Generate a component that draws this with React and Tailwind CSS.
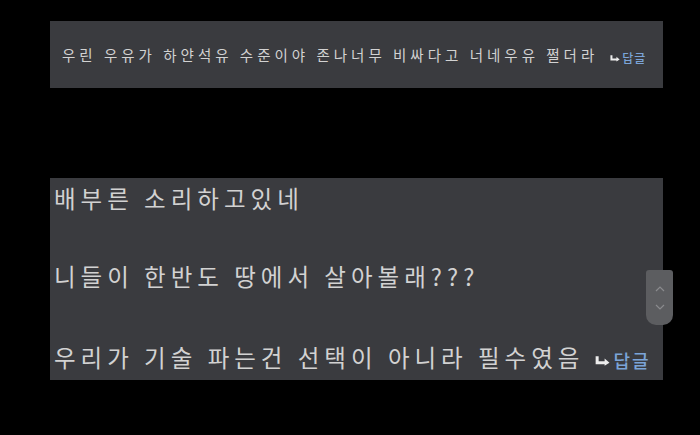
const font = { fontFamily: '"Noto Sans CJK KR", "Noto Sans", sans-serif' }

function ReplyTag({ size = 'sm' }) {
  const big = size === 'lg'
  return (
    <span className={`inline-flex items-center ${big ? 'gap-[3px]' : 'gap-[2px]'}`}>
      <svg width={big ? 15 : 10} height={big ? 11 : 8} viewBox="0 0 14 10" className="shrink-0">
        <path d="M2 1 V7 H10" fill="none" stroke="#ececec" strokeWidth="2.8" />
        <path d="M9 3.2 L13.5 7 L9 10 Z" fill="#ececec" />
      </svg>
      <span
        className={
          big
            ? 'text-[18px] tracking-[2px] font-medium text-[#7ba4d8]'
            : 'text-[12px] tracking-[1px] font-medium text-[#7ba4d8]'
        }
      >
        답글
      </span>
    </span>
  )
}

export default function App() {
  return (
    <div className="w-[700px] h-[435px] bg-black overflow-hidden pt-[21px]" style={font}>
      {/* first comment */}
      <div className="ml-[50px] w-[613px] h-[67px] bg-[#3a3b3f] flex items-center pl-[12px] pt-[1px]">
        <span className="text-[14.5px] text-[#d2d2d2] tracking-[4px] whitespace-nowrap">
          우린 우유가 하얀석유 수준이야 존나너무 비싸다고 너네우유 쩔더라
        </span>
        <span className="ml-[12px]">
          <ReplyTag />
        </span>
      </div>

      {/* second comment */}
      <div className="relative ml-[50px] mt-[90px] w-[613px] h-[202px] bg-[#3a3b3f] pl-[4px] pt-[1px]">
        <div className="text-[23.5px] leading-[39px] text-[#d2d2d2] tracking-[5px] whitespace-nowrap">
          <p>배부른 소리하고있네</p>
          <p>&nbsp;</p>
          <p>니들이 한반도 땅에서 살아볼래???</p>
          <p>&nbsp;</p>
          <p className="flex items-center">
            <span>우리가 기술 파는건 선택이 아니라 필수였음</span>
            <span className="ml-[11px] mt-[2px]">
              <ReplyTag size="lg" />
            </span>
          </p>
        </div>

        {/* scrollbar thumb */}
        <div className="absolute left-[596px] top-[92px] w-[27px] h-[55px] bg-[#5c5d60] rounded-b-[10px] rounded-t-[3px] flex flex-col items-center justify-center gap-[12px]">
          <svg width="10" height="6" viewBox="0 0 10 6">
            <path d="M1 5 L5 1 L9 5" fill="none" stroke="#8a8b8e" strokeWidth="1.2" />
          </svg>
          <svg width="10" height="6" viewBox="0 0 10 6">
            <path d="M1 1 L5 5 L9 1" fill="none" stroke="#8a8b8e" strokeWidth="1.2" />
          </svg>
        </div>
      </div>
    </div>
  )
}
